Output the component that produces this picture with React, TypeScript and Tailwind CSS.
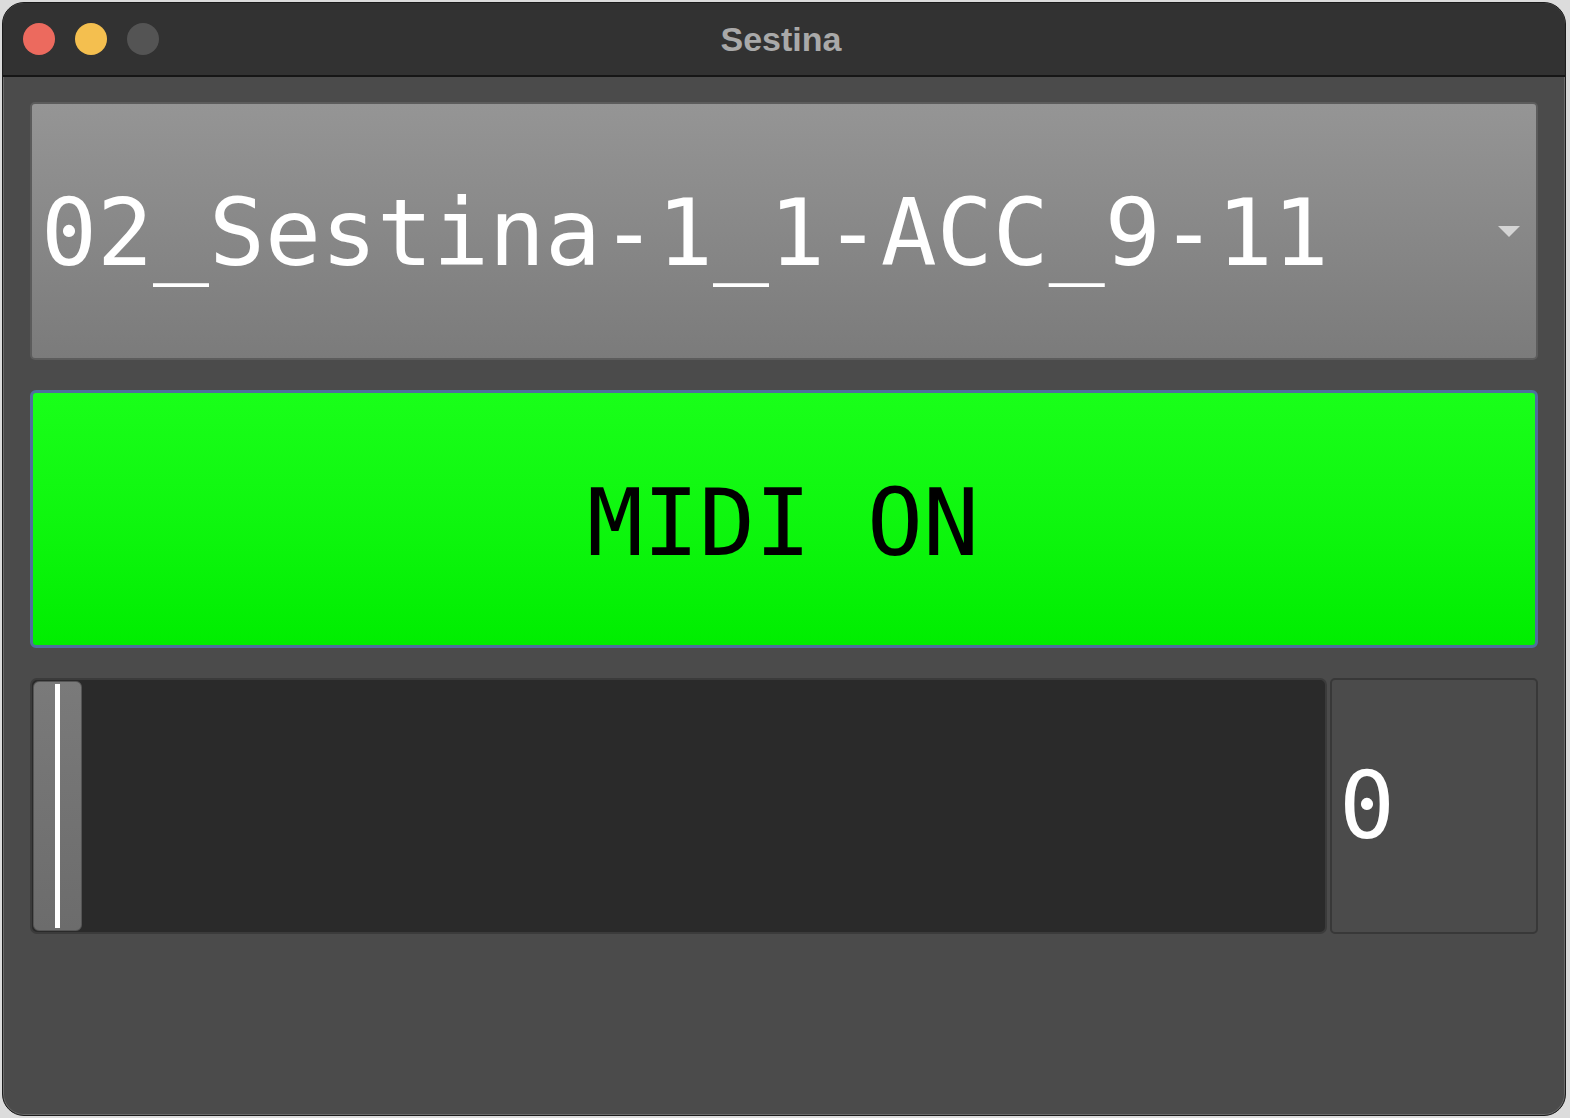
const mono = { fontFamily: '"DejaVu Sans Mono", "Liberation Mono", monospace' };

export default function App() {
  return (
    <div className="w-[1570px] h-[1118px] bg-[#dcdcdc] p-[2px]">
      <div className="h-[1114px] w-[1564px] rounded-[22px] border border-[#1c1c1c] bg-[#4b4b4b] overflow-hidden flex flex-col shadow-[inset_0_0_0_1px_#6a6a6a]">
        {/* Title bar */}
        <div className="relative h-[74px] shrink-0 bg-[#323232] border-b-2 border-[#161616] flex items-center">
          <div className="flex items-center gap-[20px] pl-[20px]">
            <span className="w-[32px] h-[32px] rounded-full bg-[#ec6a5e]" />
            <span className="w-[32px] h-[32px] rounded-full bg-[#f4bf4f]" />
            <span className="w-[32px] h-[32px] rounded-full bg-[#545454]" />
          </div>
          <div
            className="absolute inset-0 flex items-center justify-center pr-[6px] text-[34px] font-bold text-[#a9a9a9]"
            style={{ fontFamily: '"Liberation Sans", Arial, sans-serif' }}
          >
            Sestina
          </div>
        </div>

        {/* Content */}
        <div className="flex flex-col gap-[30px] px-[27px] pt-[25px]">
          {/* Combo box */}
          <div className="h-[258px] rounded-[5px] border-2 border-[#5c5c5c] bg-gradient-to-b from-[#959595] to-[#7b7b7b] flex items-center pl-[9px] pr-[14px]">
            <span className="flex-1 text-[93px] leading-none text-white pt-[4px] slashed-zero" style={mono}>
              02_Sestina-1_1-ACC_9-11
            </span>
            <svg width="22" height="12" viewBox="0 0 22 12" className="mr-[2px] mt-[2px]">
              <path d="M0 0h22L11 11z" fill="#d4d4d4" />
            </svg>
          </div>

          {/* MIDI button */}
          <div className="h-[258px] rounded-[6px] border-[3px] border-[#4f6f9c] bg-gradient-to-b from-[#19ff19] to-[#00ee00] flex items-center justify-center">
            <span className="text-[93px] leading-none text-black pt-[8px] pr-[2px]" style={mono}>
              MIDI ON
            </span>
          </div>

          {/* Slider + value */}
          <div className="h-[256px] flex gap-[3px]">
            <div className="flex-1 rounded-[7px] border-2 border-[#3b3b3b] bg-[#2a2a2a] p-[1px] flex">
              <div className="w-[49px] h-full rounded-[6px] border border-[#555] bg-gradient-to-b from-[#7a7a7a] to-[#6c6c6c] flex justify-center py-[2px]">
                <div className="w-[5px] h-full bg-white" />
              </div>
            </div>
            <div className="w-[208px] rounded-[5px] border-2 border-[#383838] bg-[#4b4b4b] flex items-center pl-[7px]">
              <span className="text-[93px] leading-none text-white slashed-zero" style={mono}>
                0
              </span>
            </div>
          </div>
        </div>
      </div>
    </div>
  );
}
